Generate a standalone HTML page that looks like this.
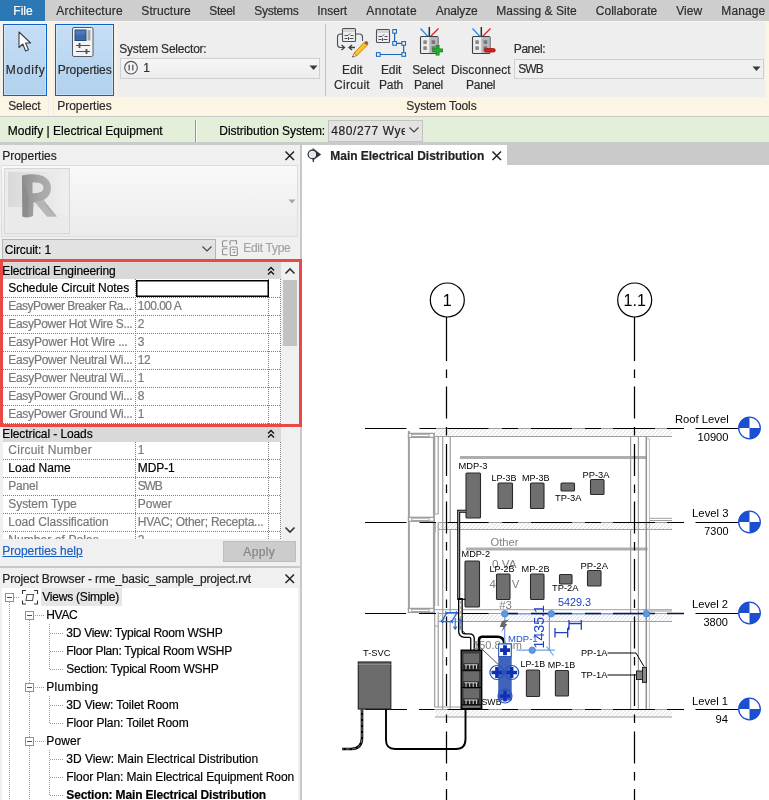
<!DOCTYPE html>
<html><head><meta charset="utf-8"><title>Revit</title>
<style>
html,body{margin:0;padding:0}
body{width:769px;height:800px;position:relative;overflow:hidden;background:#fff;font-family:"Liberation Sans",sans-serif;font-size:12px}
.t{position:absolute;white-space:nowrap;display:block;-webkit-text-stroke:0.18px currentColor}
.b{position:absolute;box-sizing:border-box}
svg{position:absolute;overflow:visible}
svg text{font-family:"Liberation Sans",sans-serif}
#root{position:absolute;left:0;top:0;width:769px;height:800px;will-change:transform;overflow:hidden}
</style></head><body><div id="root">
<div class="b" style="left:0px;top:0px;width:769px;height:21px;background:#cecece;"></div>
<div class="b" style="left:0px;top:0px;width:45px;height:21px;background:#2b78b4;"></div>
<span class="t" style="left:13.30px;top:2.94px;font-size:12px;line-height:16px;color:#ffffff;letter-spacing:0.021px;">File</span>
<span class="t" style="left:56.30px;top:2.94px;font-size:12px;line-height:16px;color:#2c2c2c;letter-spacing:0.216px;">Architecture</span>
<span class="t" style="left:141.30px;top:2.94px;font-size:12px;line-height:16px;color:#2c2c2c;letter-spacing:0.089px;">Structure</span>
<span class="t" style="left:209.30px;top:2.94px;font-size:12px;line-height:16px;color:#2c2c2c;letter-spacing:-0.363px;">Steel</span>
<span class="t" style="left:254.30px;top:2.94px;font-size:12px;line-height:16px;color:#2c2c2c;letter-spacing:-0.268px;">Systems</span>
<span class="t" style="left:317.30px;top:2.94px;font-size:12px;line-height:16px;color:#2c2c2c;letter-spacing:-0.022px;">Insert</span>
<span class="t" style="left:366.30px;top:2.94px;font-size:12px;line-height:16px;color:#2c2c2c;letter-spacing:0.337px;">Annotate</span>
<span class="t" style="left:435.80px;top:2.94px;font-size:12px;line-height:16px;color:#2c2c2c;letter-spacing:-0.132px;">Analyze</span>
<span class="t" style="left:496.30px;top:2.94px;font-size:12px;line-height:16px;color:#2c2c2c;letter-spacing:0.028px;">Massing &amp; Site</span>
<span class="t" style="left:595.80px;top:2.94px;font-size:12px;line-height:16px;color:#2c2c2c;letter-spacing:0.003px;">Collaborate</span>
<span class="t" style="left:676.30px;top:2.94px;font-size:12px;line-height:16px;color:#2c2c2c;letter-spacing:0.035px;">View</span>
<span class="t" style="left:721.30px;top:2.94px;font-size:12px;line-height:16px;color:#2c2c2c;letter-spacing:0.107px;">Manage</span>
<div class="b" style="left:0px;top:21px;width:769px;height:95px;background:#fdf5e4;"></div>
<div class="b" style="left:117px;top:22px;width:648px;height:75px;background:#eeeeee;"></div>
<div class="b" style="left:0px;top:22.4px;width:48.8px;height:74.6px;background:#f5f0ea;"></div>
<div class="b" style="left:53px;top:22.4px;width:63px;height:74.6px;background:#f5f0ea;"></div>
<div class="b" style="left:48px;top:97px;width:1px;height:18.5px;background:#ececec;"></div>
<div class="b" style="left:53px;top:97px;width:1px;height:18.5px;background:#ececec;"></div>
<div class="b" style="left:3px;top:24px;width:44px;height:72px;background:linear-gradient(#c6def5,#b0d1ee);border:1px solid #0f62cc;box-shadow:inset 0 0 0 1px rgba(255,255,255,.3);"></div>
<div class="b" style="left:55px;top:24px;width:59px;height:72px;background:linear-gradient(#c6def5,#b0d1ee);border:1px solid #0f62cc;box-shadow:inset 0 0 0 1px rgba(255,255,255,.3);"></div>
<span class="t" style="left:5.80px;top:62.14px;font-size:12px;line-height:16px;color:#2c2c2c;letter-spacing:0.711px;">Modify</span>
<span class="t" style="left:57.80px;top:62.14px;font-size:12px;line-height:16px;color:#2c2c2c;letter-spacing:-0.088px;">Properties</span>
<span class="t" style="left:8.30px;top:98.14px;font-size:12px;line-height:16px;color:#2c2c2c;letter-spacing:-0.191px;">Select</span>
<span class="t" style="left:57.30px;top:98.14px;font-size:12px;line-height:16px;color:#2c2c2c;letter-spacing:-0.033px;">Properties</span>
<svg style="left:17px;top:30px" width="16" height="24" viewBox="0 0 16 24">
<path d="M2 2 L2 17.5 L5.8 14 L8.6 21 L11.4 19.8 L8.6 13 L13.6 13 Z" fill="#fff" stroke="#3a3f48" stroke-width="1.1" stroke-linejoin="round"/></svg>
<svg style="left:71px;top:26px" width="24" height="32" viewBox="0 0 24 32">
<rect x="1.5" y="1.5" width="20.5" height="29" rx="1.5" fill="#f4f4f4" stroke="#555b66" stroke-width="1"/>
<rect x="4" y="4" width="11" height="10.5" fill="#3b68a8" stroke="#27487c" stroke-width="1"/>
<rect x="4.5" y="4.5" width="10" height="4" fill="#5a86c2" opacity=".6"/>
<rect x="16.5" y="4" width="3" height="10.500" fill="#a8a8a8"/>
<path d="M5 19.500 H19 M5 25.500 H19" stroke="#4a4f58" stroke-width="1.1"/>
<path d="M8.5 17 V22 M15.500 23 V28" stroke="#4a4f58" stroke-width="1.800"/>
</svg>
<span class="t" style="left:119.30px;top:40.64px;font-size:12px;line-height:16px;color:#2c2c2c;letter-spacing:-0.220px;">System Selector:</span>
<div class="b" style="left:120px;top:57.5px;width:200px;height:21px;background:linear-gradient(#f6f6f6,#ececec);border:1px solid #d0d0d0;"></div>
<svg style="left:123px;top:60px" width="16" height="16" viewBox="0 0 16 16">
<circle cx="8" cy="7.7" r="6.300" fill="#f4f4f4" stroke="#505560" stroke-width="1.1"/>
<path d="M6.200 4.800 V10.600 M9.800 4.800 V10.600" stroke="#505560" stroke-width="1.300"/></svg>
<span class="t" style="left:143.30px;top:59.64px;font-size:12px;line-height:16px;color:#2c2c2c;">1</span>
<svg style="left:309px;top:65px" width="10" height="6"><path d="M0.500 0.500 H8.500 L4.500 5 Z" fill="#3a3a3a"/></svg>
<div class="b" style="left:325px;top:24px;width:1px;height:72px;background:#c4c4c4;"></div>
<svg style="left:335px;top:25px" width="34" height="34" viewBox="0 0 34 34">
<path d="M7.500 9 H5.500 Q2.500 9 2.500 12 V19.500 Q2.500 22.500 5.500 22.500 H9" fill="none" stroke="#4a4f5a" stroke-width="1.100"/>
<path d="M20.500 9 H24.500 Q27.500 9 27.500 12 V16" fill="none" stroke="#4a4f5a" stroke-width="1.100"/>
<path d="M6.500 20 L9.500 22.500 L6.500 25 M17 20 L14 22.500 L17 25 M14 22.500 H20" fill="none" stroke="#3a3f4a" stroke-width="1.300"/>
<rect x="7.500" y="3.500" width="13" height="13" rx="1" fill="#efefef" stroke="#4a4f5a" stroke-width="1.100"/>
<rect x="8" y="4" width="12" height="3" fill="#d4d4d4"/>
<path d="M9.500 10.500 H13 L15 8.500 M15.500 10.500 H18.500 M9.500 13.500 H12.500 M13.500 12 V15 M14.500 13.500 H18.500" stroke="#4a4f5a" stroke-width="1" fill="none"/>
<path d="M19 28 L29 17.500 L32 20.500 L21.500 31 Z" fill="#f7c325" stroke="#b87a10" stroke-width=".8"/>
<path d="M29 17.500 L30.300 16.200 Q31.300 15.500 32.300 16.500 L33 17.300 Q33.700 18.300 33 19.200 L32 20.500 Z" fill="#a85f1c"/>
<path d="M19 28 L21.500 31 L17.300 32.200 Z" fill="#f3e6c8" stroke="#8a6a30" stroke-width=".6"/>
<path d="M17.300 32.200 L18.200 30.400 L19 31.600 Z" fill="#333"/>
</svg>
<span class="t" style="left:341.90px;top:62.14px;font-size:12px;line-height:16px;color:#2c2c2c;letter-spacing:0.041px;">Edit</span>
<span class="t" style="left:334.10px;top:77.14px;font-size:12px;line-height:16px;color:#2c2c2c;letter-spacing:0.266px;">Circuit</span>
<svg style="left:374px;top:26px" width="34" height="34" viewBox="0 0 34 34">
<rect x="2.500" y="3.500" width="13" height="13" rx="1" fill="#efefef" stroke="#4a4f5a" stroke-width="1.100"/>
<rect x="3" y="4" width="12" height="3" fill="#d4d4d4"/>
<path d="M4.500 10.500 H8 L10 8.500 M10.500 10.500 H13.500 M4.500 13.500 H7.500 M8.500 12 V15 M9.500 13.500 H13.500" stroke="#4a4f5a" stroke-width="1" fill="none"/>
<path d="M20.600 5.400 V17.400 H29.700 V28.500 H4.300" fill="none" stroke="#1a66b8" stroke-width="1.200"/>
<g fill="#fff" stroke="#1a66b8" stroke-width="1.100">
<rect x="18.800" y="3.600" width="3.600" height="3.600"/><rect x="18.800" y="15.600" width="3.600" height="3.600"/>
<rect x="27.900" y="15.600" width="3.600" height="3.600"/><rect x="27.900" y="26.700" width="3.600" height="3.600"/>
<rect x="2.500" y="26.700" width="3.600" height="3.600"/></g>
</svg>
<span class="t" style="left:380.90px;top:62.14px;font-size:12px;line-height:16px;color:#2c2c2c;letter-spacing:-0.059px;">Edit</span>
<span class="t" style="left:378.90px;top:77.14px;font-size:12px;line-height:16px;color:#2c2c2c;letter-spacing:-0.095px;">Path</span>
<svg style="left:419px;top:26px" width="30" height="32" viewBox="0 0 30 32">
<path d="M1.500 2.500 L9 10.500" stroke="#1e90ff" stroke-width="1.300"/>
<path d="M19.500 2.500 L11.500 10.500" stroke="#e02020" stroke-width="1.300"/>
<path d="M10.300 1 V10.500" stroke="#2a2e36" stroke-width="1.500"/>
<rect x="1.500" y="10.500" width="17.500" height="17" rx="1" fill="#ececec" stroke="#3a3f4a" stroke-width="1.100"/>
<rect x="10.300" y="11" width="8.200" height="16" fill="#b9b9b9"/>
<rect x="4.300" y="14.300" width="3.600" height="3.600" rx=".6" fill="#8a8a8a"/><rect x="4.300" y="20.300" width="3.600" height="3.600" rx=".6" fill="#8a8a8a"/>
<rect x="12.600" y="14.300" width="3.600" height="3.600" rx=".6" fill="#777"/><rect x="12.600" y="20.300" width="3.600" height="3.600" rx=".6" fill="#777"/>
<path d="M18.600 19 V29.600 M13.300 24.300 H23.900" stroke="#0a7a10" stroke-width="3.800"/><path d="M18.600 19.600 V29 M13.900 24.300 H23.300" stroke="#22b02a" stroke-width="2.400"/></svg>
<svg style="left:471px;top:26px" width="30" height="32" viewBox="0 0 30 32">
<path d="M1.500 2.500 L9 10.500" stroke="#1e90ff" stroke-width="1.300"/>
<path d="M19.500 2.500 L11.500 10.500" stroke="#e02020" stroke-width="1.300"/>
<path d="M10.300 1 V10.500" stroke="#2a2e36" stroke-width="1.500"/>
<rect x="1.500" y="10.500" width="17.500" height="17" rx="1" fill="#ececec" stroke="#3a3f4a" stroke-width="1.100"/>
<rect x="10.300" y="11" width="8.200" height="16" fill="#b9b9b9"/>
<rect x="4.300" y="14.300" width="3.600" height="3.600" rx=".6" fill="#8a8a8a"/><rect x="4.300" y="20.300" width="3.600" height="3.600" rx=".6" fill="#8a8a8a"/>
<rect x="12.600" y="14.300" width="3.600" height="3.600" rx=".6" fill="#777"/><rect x="12.600" y="20.300" width="3.600" height="3.600" rx=".6" fill="#777"/>
<rect x="13.200" y="22.600" width="11" height="3.400" rx="1.500" fill="#d81e1e" stroke="#a01010" stroke-width=".8"/></svg>
<span class="t" style="left:412.30px;top:62.14px;font-size:12px;line-height:16px;color:#2c2c2c;letter-spacing:-0.191px;">Select</span>
<span class="t" style="left:414.10px;top:77.14px;font-size:12px;line-height:16px;color:#2c2c2c;letter-spacing:-0.398px;">Panel</span>
<span class="t" style="left:450.90px;top:62.14px;font-size:12px;line-height:16px;color:#2c2c2c;letter-spacing:0.049px;">Disconnect</span>
<span class="t" style="left:466.10px;top:77.14px;font-size:12px;line-height:16px;color:#2c2c2c;letter-spacing:-0.323px;">Panel</span>
<span class="t" style="left:513.80px;top:40.64px;font-size:12px;line-height:16px;color:#2c2c2c;letter-spacing:-0.425px;">Panel:</span>
<div class="b" style="left:514px;top:59px;width:250px;height:20px;background:#f0f0f0;border:1px solid #cfcfcf;"></div>
<span class="t" style="left:518.30px;top:61.14px;font-size:12px;line-height:16px;color:#2c2c2c;letter-spacing:-0.967px;">SWB</span>
<svg style="left:752px;top:66px" width="10" height="6"><path d="M0.500 0.500 H8.500 L4.500 5 Z" fill="#3a3a3a"/></svg>
<span class="t" style="left:406.30px;top:98.14px;font-size:12px;line-height:16px;color:#2c2c2c;letter-spacing:-0.067px;">System Tools</span>
<div class="b" style="left:0px;top:116px;width:769px;height:1px;background:#c9c9c9;"></div>
<div class="b" style="left:0px;top:117px;width:769px;height:25px;background:#e4efd9;"></div>
<span class="t" style="left:7.80px;top:122.64px;font-size:12px;line-height:16px;color:#000;letter-spacing:0.014px;">Modify | Electrical Equipment</span>
<div class="b" style="left:195px;top:120px;width:1px;height:22px;background:#8f968a;"></div>
<div class="b" style="left:196px;top:120px;width:1px;height:22px;background:#ffffff;"></div>
<span class="t" style="left:219.30px;top:122.64px;font-size:12px;line-height:16px;color:#000;letter-spacing:-0.042px;">Distribution System:</span>
<div class="b" style="left:328px;top:119.5px;width:95px;height:22px;background:#e3e3e3;border:1px solid #c3c3c3;"></div>
<span class="t" style="left:331.30px;top:122.64px;font-size:12px;line-height:16px;color:#222;letter-spacing:0.579px;width:73.5px;overflow:hidden;">480/277 Wye</span>
<svg style="left:408px;top:126px" width="12" height="8"><path d="M1.500 1.500 L6 6 L10.500 1.500" fill="none" stroke="#444" stroke-width="1.200"/></svg>
<div class="b" style="left:0px;top:142px;width:769px;height:22.5px;background:#cacaca;"></div>
<div class="b" style="left:0px;top:145px;width:300px;height:421px;background:#f0f0f0;"></div>
<div class="b" style="left:300px;top:145px;width:2px;height:655px;background:#c8c8c8;"></div>
<span class="t" style="left:2.30px;top:147.64px;font-size:12px;line-height:16px;color:#222;letter-spacing:-0.033px;">Properties</span>
<svg style="left:284px;top:150px" width="12" height="12"><path d="M1.500 1.500 L10 10 M10 1.500 L1.500 10" stroke="#222" stroke-width="1.500"/></svg>
<div class="b" style="left:1px;top:165px;width:297px;height:72px;background:linear-gradient(#f9f9f9,#ebebeb);border:1px solid #dedede;"></div>
<div class="b" style="left:4px;top:168px;width:66px;height:66px;background:#ececec;border:1px solid #d6d6d6;"></div>
<svg style="left:5px;top:169px" width="64" height="64" viewBox="0 0 64 64">
<defs><linearGradient id="tg" x1="0" x2="1"><stop offset="0" stop-color="#d9d9d9"/><stop offset="1" stop-color="#efefef"/></linearGradient>
<linearGradient id="rg" x1="0" x2="1"><stop offset="0" stop-color="#8f8f8f"/><stop offset=".5" stop-color="#a6a6a6"/><stop offset="1" stop-color="#b4b4b4"/></linearGradient></defs>
<path d="M3 3 H63 V47 L30 38 L3 38 Z" fill="url(#tg)"/>
<path d="M3 38 L30 38 L63 47 V63 H3 Z" fill="#eaeaea"/>
<path d="M17 6.500 Q30 4 38 7 Q46 11 46 19 Q46 27 38.500 31 L52 47.500 L42 47.500 L30 33 L28.500 33.500 L28 47 Q23 49.500 17.500 47.500 Z M27.500 13.500 V24.200 Q38.500 24.800 38.500 18.600 Q38.500 12.800 27.500 13.500 Z" fill="url(#rg)" fill-rule="evenodd"/>
<path d="M17 6.500 L17.500 47.500 Q20 48.500 22.500 48.300 L24 30 Q22 18 17 6.500 Z" fill="#8a8a8a" opacity=".75"/>
<path d="M30 33 L42 47.500 L52 47.500 Q44 45.500 38.500 31 Z" fill="#bcbcbc" opacity=".7"/>
</svg>
<svg style="left:288px;top:199px" width="9" height="6"><path d="M0.500 0.500 H7.500 L4 4.500 Z" fill="#a4a4a4"/></svg>
<div class="b" style="left:2px;top:239px;width:214px;height:21px;background:#e2e2e2;border:1px solid #b5b5b5;border-bottom-color:#e2e2e2;"></div>
<span class="t" style="left:4.80px;top:241.64px;font-size:12px;line-height:16px;color:#000;letter-spacing:-0.105px;">Circuit: 1</span>
<svg style="left:201px;top:245px" width="12" height="8"><path d="M1.500 1.500 L6 6 L10.500 1.500" fill="none" stroke="#444" stroke-width="1.200"/></svg>
<svg style="left:221px;top:239px" width="18" height="18" viewBox="0 0 18 18" fill="none" stroke="#8f8f8f" stroke-width="1.100">
<path d="M6.500 1.800 H2.800 Q1.500 1.800 1.500 3 V6.500 Q1.500 7.800 2.800 7.800 H6.500"/>
<path d="M6.500 9.800 H2.800 Q1.500 9.800 1.500 11 V14.500 Q1.500 15.800 2.800 15.800 H6.500"/>
<path d="M9 1.800 H15.500 V5.500 M9 1.800 V6"/>
<rect x="9.300" y="8" width="7" height="8.500" rx="1" fill="#f4f4f4"/>
<path d="M11 10.500 H14.600 M11.500 13.300 H14 M13 12.300 L14.200 13.300 L13 14.300" stroke-width=".9"/></svg>
<span class="t" style="left:243.30px;top:240.14px;font-size:12px;line-height:16px;color:#a3a3a3;letter-spacing:-0.302px;">Edit Type</span>
<div class="b" style="left:3px;top:262px;width:278px;height:277px;background:#ffffff;"></div>
<div class="b" style="left:281px;top:262px;width:17px;height:277px;background:#f0f0f0;"></div>
<div class="b" style="left:3px;top:262px;width:278px;height:17px;background:#d9d9d9;"></div>
<div class="b" style="left:3px;top:427px;width:278px;height:15px;background:#d9d9d9;"></div>
<svg style="left:267px;top:265.5px" width="8" height="10"><path d="M1 4.500 L4 1.500 L7 4.500 M1 8.500 L4 5.500 L7 8.500" fill="none" stroke="#111" stroke-width="1.300"/></svg>
<svg style="left:267px;top:428.5px" width="8" height="10"><path d="M1 4.500 L4 1.500 L7 4.500 M1 8.500 L4 5.500 L7 8.500" fill="none" stroke="#111" stroke-width="1.300"/></svg>
<span class="t" style="left:2.30px;top:263.14px;font-size:12px;line-height:16px;color:#000000;letter-spacing:-0.127px;">Electrical Engineering</span>
<span class="t" style="left:2.30px;top:425.64px;font-size:12px;line-height:16px;color:#000000;letter-spacing:-0.097px;">Electrical - Loads</span>
<span class="t" style="left:8.30px;top:280.14px;font-size:12px;line-height:16px;color:#000000;letter-spacing:-0.055px;">Schedule Circuit Notes</span>
<div class="b" style="left:3px;top:297px;width:278px;height:1px;background-image:linear-gradient(to right,#7d7d7d 50%,transparent 50%);background-size:2px 1px;"></div>
<span class="t" style="left:8.30px;top:298.14px;font-size:12px;line-height:16px;color:#787878;letter-spacing:-0.501px;">EasyPower Breaker Ra...</span>
<span class="t" style="left:137.80px;top:298.14px;font-size:12px;line-height:16px;color:#787878;letter-spacing:-0.497px;">100.00 A</span>
<div class="b" style="left:3px;top:315px;width:278px;height:1px;background-image:linear-gradient(to right,#7d7d7d 50%,transparent 50%);background-size:2px 1px;"></div>
<span class="t" style="left:8.30px;top:316.14px;font-size:12px;line-height:16px;color:#787878;letter-spacing:-0.347px;">EasyPower Hot Wire S...</span>
<span class="t" style="left:137.80px;top:316.14px;font-size:12px;line-height:16px;color:#787878;">2</span>
<div class="b" style="left:3px;top:333px;width:278px;height:1px;background-image:linear-gradient(to right,#7d7d7d 50%,transparent 50%);background-size:2px 1px;"></div>
<span class="t" style="left:8.30px;top:334.14px;font-size:12px;line-height:16px;color:#787878;letter-spacing:-0.221px;">EasyPower Hot Wire ...</span>
<span class="t" style="left:137.80px;top:334.14px;font-size:12px;line-height:16px;color:#787878;">3</span>
<div class="b" style="left:3px;top:351px;width:278px;height:1px;background-image:linear-gradient(to right,#7d7d7d 50%,transparent 50%);background-size:2px 1px;"></div>
<span class="t" style="left:8.30px;top:352.14px;font-size:12px;line-height:16px;color:#787878;letter-spacing:-0.256px;">EasyPower Neutral Wi...</span>
<span class="t" style="left:137.80px;top:352.14px;font-size:12px;line-height:16px;color:#787878;letter-spacing:-0.448px;">12</span>
<div class="b" style="left:3px;top:369px;width:278px;height:1px;background-image:linear-gradient(to right,#7d7d7d 50%,transparent 50%);background-size:2px 1px;"></div>
<span class="t" style="left:8.30px;top:370.14px;font-size:12px;line-height:16px;color:#787878;letter-spacing:-0.256px;">EasyPower Neutral Wi...</span>
<span class="t" style="left:137.80px;top:370.14px;font-size:12px;line-height:16px;color:#787878;">1</span>
<div class="b" style="left:3px;top:387px;width:278px;height:1px;background-image:linear-gradient(to right,#7d7d7d 50%,transparent 50%);background-size:2px 1px;"></div>
<span class="t" style="left:8.30px;top:388.14px;font-size:12px;line-height:16px;color:#787878;letter-spacing:-0.332px;">EasyPower Ground Wi...</span>
<span class="t" style="left:137.80px;top:388.14px;font-size:12px;line-height:16px;color:#787878;">8</span>
<div class="b" style="left:3px;top:405px;width:278px;height:1px;background-image:linear-gradient(to right,#7d7d7d 50%,transparent 50%);background-size:2px 1px;"></div>
<span class="t" style="left:8.30px;top:406.14px;font-size:12px;line-height:16px;color:#787878;letter-spacing:-0.332px;">EasyPower Ground Wi...</span>
<span class="t" style="left:137.80px;top:406.14px;font-size:12px;line-height:16px;color:#787878;">1</span>
<div class="b" style="left:3px;top:423px;width:278px;height:1px;background-image:linear-gradient(to right,#7d7d7d 50%,transparent 50%);background-size:2px 1px;"></div>
<div class="b" style="left:135px;top:279px;width:1px;height:145px;background-image:linear-gradient(to bottom,#7d7d7d 50%,transparent 50%);background-size:1px 2px;"></div>
<div class="b" style="left:268px;top:279px;width:1px;height:145px;background-image:linear-gradient(to bottom,#7d7d7d 50%,transparent 50%);background-size:1px 2px;"></div>
<div class="b" style="left:280px;top:279px;width:1px;height:145px;background-image:linear-gradient(to bottom,#7d7d7d 50%,transparent 50%);background-size:1px 2px;"></div>
<div class="b" style="left:136px;top:280px;width:133px;height:17px;background:#fff;border:1px solid #000;box-shadow:inset 0 0 0 0.500px #000;"></div>
<div class="b" style="left:3px;top:441px;width:278px;height:98px;overflow:hidden">
<span class="t" style="left:5.30px;top:0.64px;font-size:12px;line-height:16px;color:#787878;letter-spacing:0.260px;">Circuit Number</span>
<span class="t" style="left:134.80px;top:0.64px;font-size:12px;line-height:16px;color:#787878;">1</span>
<span class="t" style="left:5.30px;top:18.64px;font-size:12px;line-height:16px;color:#000000;letter-spacing:0.045px;">Load Name</span>
<span class="t" style="left:134.80px;top:18.64px;font-size:12px;line-height:16px;color:#000000;letter-spacing:-0.109px;">MDP-1</span>
<span class="t" style="left:5.30px;top:36.64px;font-size:12px;line-height:16px;color:#787878;letter-spacing:-0.198px;">Panel</span>
<span class="t" style="left:134.80px;top:36.64px;font-size:12px;line-height:16px;color:#787878;letter-spacing:-1.217px;">SWB</span>
<span class="t" style="left:5.30px;top:54.64px;font-size:12px;line-height:16px;color:#787878;letter-spacing:-0.074px;">System Type</span>
<span class="t" style="left:134.80px;top:54.64px;font-size:12px;line-height:16px;color:#787878;letter-spacing:-0.029px;">Power</span>
<span class="t" style="left:5.30px;top:72.64px;font-size:12px;line-height:16px;color:#787878;letter-spacing:-0.018px;">Load Classification</span>
<span class="t" style="left:134.80px;top:72.64px;font-size:12px;line-height:16px;color:#787878;letter-spacing:-0.209px;">HVAC; Other; Recepta...</span>
<span class="t" style="left:5.30px;top:90.64px;font-size:12px;line-height:16px;color:#787878;letter-spacing:0.073px;">Number of Poles</span>
<span class="t" style="left:134.80px;top:90.64px;font-size:12px;line-height:16px;color:#787878;">2</span>
</div>
<div class="b" style="left:3px;top:459px;width:278px;height:1px;background-image:linear-gradient(to right,#7d7d7d 50%,transparent 50%);background-size:2px 1px;"></div>
<div class="b" style="left:3px;top:477px;width:278px;height:1px;background-image:linear-gradient(to right,#7d7d7d 50%,transparent 50%);background-size:2px 1px;"></div>
<div class="b" style="left:3px;top:495px;width:278px;height:1px;background-image:linear-gradient(to right,#7d7d7d 50%,transparent 50%);background-size:2px 1px;"></div>
<div class="b" style="left:3px;top:513px;width:278px;height:1px;background-image:linear-gradient(to right,#7d7d7d 50%,transparent 50%);background-size:2px 1px;"></div>
<div class="b" style="left:3px;top:531px;width:278px;height:1px;background-image:linear-gradient(to right,#7d7d7d 50%,transparent 50%);background-size:2px 1px;"></div>
<div class="b" style="left:135px;top:442px;width:1px;height:97px;background-image:linear-gradient(to bottom,#7d7d7d 50%,transparent 50%);background-size:1px 2px;"></div>
<div class="b" style="left:268px;top:442px;width:1px;height:97px;background-image:linear-gradient(to bottom,#7d7d7d 50%,transparent 50%);background-size:1px 2px;"></div>
<div class="b" style="left:280px;top:442px;width:1px;height:97px;background-image:linear-gradient(to bottom,#7d7d7d 50%,transparent 50%);background-size:1px 2px;"></div>
<div class="b" style="left:283px;top:280px;width:14px;height:66px;background:#c2c2c2;"></div>
<svg style="left:284px;top:267px" width="12" height="8"><path d="M1.500 6.500 L6 2 L10.500 6.500" fill="none" stroke="#333" stroke-width="1.600"/></svg>
<svg style="left:284px;top:526px" width="12" height="8"><path d="M1.500 1.500 L6 6 L10.500 1.500" fill="none" stroke="#333" stroke-width="1.600"/></svg>
<div class="b" style="left:0px;top:259px;width:302px;height:168px;border:3px solid #e84a43;"></div>
<span class="t" style="left:2.30px;top:543.14px;font-size:12px;line-height:16px;color:#1a5fc4;letter-spacing:-0.023px;text-decoration:underline;">Properties help</span>
<div class="b" style="left:223px;top:541px;width:73px;height:21px;background:#cccccc;border:1px solid #bdbdbd;"></div>
<span class="t" style="left:243.30px;top:543.64px;font-size:12px;line-height:16px;color:#858585;letter-spacing:0.345px;">Apply</span>
<div class="b" style="left:0px;top:566px;width:300px;height:2px;background:#c8c8c8;"></div>
<div class="b" style="left:0px;top:568px;width:300px;height:232px;background:#f0f0f0;"></div>
<div class="b" style="left:2px;top:587.5px;width:295.5px;height:213px;background:#ffffff;"></div>
<span class="t" style="left:2.30px;top:571.14px;font-size:12px;line-height:16px;color:#222;letter-spacing:-0.145px;">Project Browser - rme_basic_sample_project.rvt</span>
<svg style="left:284px;top:573px" width="12" height="12"><path d="M1.500 1.500 L10 10 M10 1.500 L1.500 10" stroke="#222" stroke-width="1.500"/></svg>
<div class="b" style="left:41px;top:588px;width:81px;height:18px;background:#e6e6e6;"></div>
<span class="t" style="left:42.30px;top:589.14px;font-size:12px;line-height:16px;color:#000;letter-spacing:-0.223px;">Views (Simple)</span>
<span class="t" style="left:46.30px;top:607.14px;font-size:12px;line-height:16px;color:#000;letter-spacing:-0.350px;">HVAC</span>
<span class="t" style="left:66.30px;top:625.14px;font-size:12px;line-height:16px;color:#000;letter-spacing:-0.262px;">3D View: Typical Room WSHP</span>
<span class="t" style="left:66.30px;top:643.14px;font-size:12px;line-height:16px;color:#000;letter-spacing:-0.260px;">Floor Plan: Typical Room WSHP</span>
<span class="t" style="left:66.30px;top:661.14px;font-size:12px;line-height:16px;color:#000;letter-spacing:-0.244px;">Section: Typical Room WSHP</span>
<span class="t" style="left:46.30px;top:679.14px;font-size:12px;line-height:16px;color:#000;letter-spacing:0.267px;">Plumbing</span>
<span class="t" style="left:66.30px;top:697.14px;font-size:12px;line-height:16px;color:#000;letter-spacing:-0.099px;">3D View: Toilet Room</span>
<span class="t" style="left:66.30px;top:715.14px;font-size:12px;line-height:16px;color:#000;letter-spacing:-0.096px;">Floor Plan: Toilet Room</span>
<span class="t" style="left:46.30px;top:733.14px;font-size:12px;line-height:16px;color:#000;letter-spacing:0.096px;">Power</span>
<span class="t" style="left:66.30px;top:751.14px;font-size:12px;line-height:16px;color:#000;letter-spacing:-0.017px;">3D View: Main Electrical Distribution</span>
<span class="t" style="left:66.30px;top:769.14px;font-size:12px;line-height:16px;color:#000;letter-spacing:-0.103px;">Floor Plan: Main Electrical Equipment Roon</span>
<span class="t" style="left:66.30px;top:787.14px;font-size:12px;line-height:16px;color:#000;letter-spacing:-0.152px;font-weight:bold;">Section: Main Electrical Distribution</span>
<div class="b" style="left:9px;top:602px;width:1px;height:198px;background-image:linear-gradient(to bottom,#9a9a9a 50%,transparent 50%);background-size:1px 2px;"></div>
<div class="b" style="left:14px;top:597px;width:6px;height:1px;background-image:linear-gradient(to right,#9a9a9a 50%,transparent 50%);background-size:2px 1px;"></div>
<div class="b" style="left:29px;top:620px;width:1px;height:180px;background-image:linear-gradient(to bottom,#9a9a9a 50%,transparent 50%);background-size:1px 2px;"></div>
<div class="b" style="left:35px;top:615px;width:9px;height:1px;background-image:linear-gradient(to right,#9a9a9a 50%,transparent 50%);background-size:2px 1px;"></div>
<div class="b" style="left:35px;top:687px;width:9px;height:1px;background-image:linear-gradient(to right,#9a9a9a 50%,transparent 50%);background-size:2px 1px;"></div>
<div class="b" style="left:35px;top:741px;width:9px;height:1px;background-image:linear-gradient(to right,#9a9a9a 50%,transparent 50%);background-size:2px 1px;"></div>
<div class="b" style="left:49px;top:624px;width:1px;height:45px;background-image:linear-gradient(to bottom,#9a9a9a 50%,transparent 50%);background-size:1px 2px;"></div>
<div class="b" style="left:49px;top:696px;width:1px;height:27px;background-image:linear-gradient(to bottom,#9a9a9a 50%,transparent 50%);background-size:1px 2px;"></div>
<div class="b" style="left:49px;top:750px;width:1px;height:45px;background-image:linear-gradient(to bottom,#9a9a9a 50%,transparent 50%);background-size:1px 2px;"></div>
<div class="b" style="left:50px;top:633px;width:14px;height:1px;background-image:linear-gradient(to right,#9a9a9a 50%,transparent 50%);background-size:2px 1px;"></div>
<div class="b" style="left:50px;top:651px;width:14px;height:1px;background-image:linear-gradient(to right,#9a9a9a 50%,transparent 50%);background-size:2px 1px;"></div>
<div class="b" style="left:50px;top:669px;width:14px;height:1px;background-image:linear-gradient(to right,#9a9a9a 50%,transparent 50%);background-size:2px 1px;"></div>
<div class="b" style="left:50px;top:705px;width:14px;height:1px;background-image:linear-gradient(to right,#9a9a9a 50%,transparent 50%);background-size:2px 1px;"></div>
<div class="b" style="left:50px;top:723px;width:14px;height:1px;background-image:linear-gradient(to right,#9a9a9a 50%,transparent 50%);background-size:2px 1px;"></div>
<div class="b" style="left:50px;top:759px;width:14px;height:1px;background-image:linear-gradient(to right,#9a9a9a 50%,transparent 50%);background-size:2px 1px;"></div>
<div class="b" style="left:50px;top:777px;width:14px;height:1px;background-image:linear-gradient(to right,#9a9a9a 50%,transparent 50%);background-size:2px 1px;"></div>
<div class="b" style="left:50px;top:795px;width:14px;height:1px;background-image:linear-gradient(to right,#9a9a9a 50%,transparent 50%);background-size:2px 1px;"></div>
<svg style="left:5px;top:593px" width="9" height="9"><rect x=".5" y=".5" width="8" height="8" fill="#fff" stroke="#919191"/><path d="M2 4.500 H7" stroke="#3b4f8a" stroke-width="1"/></svg>
<svg style="left:25px;top:611px" width="9" height="9"><rect x=".5" y=".5" width="8" height="8" fill="#fff" stroke="#919191"/><path d="M2 4.500 H7" stroke="#3b4f8a" stroke-width="1"/></svg>
<svg style="left:25px;top:683px" width="9" height="9"><rect x=".5" y=".5" width="8" height="8" fill="#fff" stroke="#919191"/><path d="M2 4.500 H7" stroke="#3b4f8a" stroke-width="1"/></svg>
<svg style="left:25px;top:737px" width="9" height="9"><rect x=".5" y=".5" width="8" height="8" fill="#fff" stroke="#919191"/><path d="M2 4.500 H7" stroke="#3b4f8a" stroke-width="1"/></svg>
<svg style="left:21px;top:589px" width="18" height="17" viewBox="0 0 18 17" fill="none" stroke="#333" stroke-width="1.100">
<path d="M1.500 5 V1.500 H5 M13 1.500 H16.500 V5 M16.500 11.500 V15 H13 M5 15 H1.500 V11.500"/>
<path d="M6 5.500 H12.500 L11.500 11.500 H5 Z" stroke="#555"/></svg>
<div class="b" style="left:302px;top:145px;width:205px;height:20px;background:#ffffff;"></div>
<div class="b" style="left:302px;top:164.5px;width:467px;height:635.5px;background:#ffffff;"></div>
<svg style="left:306px;top:146px" width="18" height="18" viewBox="306 146 18 18">
<path d="M312.600 148 L321.200 154.400 L312.600 160.800 Z" fill="#2b303b"/>
<path d="M313.400 158 V162" stroke="#2b303b" stroke-width="1.200"/>
<circle cx="312.400" cy="154.400" r="4.300" fill="#e3e7ed" stroke="#2b303b" stroke-width="1.200"/></svg>
<span class="t" style="left:330.30px;top:147.64px;font-size:12px;line-height:16px;color:#222;letter-spacing:-0.029px;font-weight:bold;">Main Electrical Distribution</span>
<svg style="left:491px;top:150px" width="12" height="12"><path d="M1.500 1.500 L10 10 M10 1.500 L1.500 10" stroke="#222" stroke-width="1.500"/></svg>
<svg style="left:0;top:0" width="769" height="800" viewBox="0 0 769 800">
<defs>
<pattern id="hat" width="4" height="4" patternUnits="userSpaceOnUse"><rect width="4" height="4" fill="#fbfbfe"/><path d="M-1 5 L5 -1 M-3 3 L3 -3 M1 7 L7 1" stroke="#dcdcf0" stroke-width=".9"/></pattern>
<clipPath id="dc"><rect x="302" y="165" width="467" height="635"/></clipPath>
</defs><g clip-path="url(#dc)">
<rect x="434.5" y="428.5" width="237.5" height="8.0" fill="url(#hat)"/>
<path d="M434.5 436.5 H672 M434.5 428.5 H672" stroke="#9e9e9e" stroke-width="1.200"/>
<rect x="439" y="522.5" width="233" height="7.0" fill="url(#hat)"/>
<path d="M439 529.5 H672 M439 522.5 H672" stroke="#9e9e9e" stroke-width="1.200"/>
<rect x="439" y="613.5" width="233" height="8.0" fill="url(#hat)"/>
<path d="M439 621.5 H672 M439 613.5 H672" stroke="#9e9e9e" stroke-width="1.200"/>
<rect x="435" y="709.5" width="237" height="7.5" fill="url(#hat)"/>
<path d="M435 717 H672 M435 709.5 H672" stroke="#9e9e9e" stroke-width="1.200"/>
<path d="M435 609.700 H672 M649 518.300 H672 M649 520.500 H672 M649 611 H672 M434.500 707 H461 M434.700 626 H438.200" stroke="#9e9e9e" stroke-width="1" fill="none"/>
<rect x="460" y="456" width="186" height="3" fill="#aeaeae"/>
<rect x="466" y="547.500" width="181.500" height="3" fill="#aeaeae"/>
<g stroke="#9e9e9e" stroke-width="1.200" fill="none">
<path d="M408.900 431 V613 M433.900 433 V613" stroke="#a2a2a2" stroke-width="2"/>
<rect x="408.500" y="433.4" width="25.500" height="4" fill="#fff" stroke-width="1.300"/>
<rect x="411.700" y="434.29999999999995" width="17.500" height="2.200" fill="none" stroke-width=".9"/>
<rect x="408.500" y="517.3" width="25.500" height="4" fill="#fff" stroke-width="1.300"/>
<rect x="411.700" y="518.1999999999999" width="17.500" height="2.200" fill="none" stroke-width=".9"/>
<rect x="408.500" y="608.4" width="25.500" height="4" fill="#fff" stroke-width="1.300"/>
<rect x="411.700" y="609.3" width="17.500" height="2.200" fill="none" stroke-width=".9"/>
<path d="M434.700 437 V514 M438.200 437 V514 M434.700 514 H438.200 M435.200 522 V532.500 M438.200 522 V532.500 M434.700 532.500 V606 M438.200 532.500 V606 M434.700 612 V707 M438.200 612 V707"/>
<path d="M442.700 436.500 V709 M450.200 436.500 V522 M450.200 529.500 V613 M450.200 621.500 V709"/>
<path d="M630.600 436.500 V522 M630.600 529.500 V613 M630.600 621.500 V709 M638.400 436.500 V709"/>
<path d="M646.300 436.500 V709" stroke="#909090" stroke-width="1.500"/>
<path d="M649.400 438.800 V709 M646.300 438.800 H649.400" stroke="#c2bcbc" stroke-width="1"/>
</g>
<path d="M446.5 317 V361" stroke="#000" stroke-width="1.250"/>
<path d="M446.5 361 V800" stroke="#000" stroke-width="1.250" stroke-dasharray="0 8.500 8.500 8.500 32 0"/>
<path d="M634.5 317 V361" stroke="#000" stroke-width="1.250"/>
<path d="M634.5 361 V800" stroke="#000" stroke-width="1.250" stroke-dasharray="0 8.500 8.500 8.500 32 0"/>
<circle cx="447.300" cy="300" r="17" fill="#fff" stroke="#000" stroke-width="1.200"/>
<circle cx="634.700" cy="300" r="17" fill="#fff" stroke="#000" stroke-width="1.200"/>
<text x="447.300" y="305.800" font-size="16" text-anchor="middle" fill="#000">1</text>
<text x="634.700" y="305.800" font-size="16" text-anchor="middle" fill="#000">1.1</text>
<path d="M365 428.5 H406.500 M419.500 428.5 H436 M447.500 428.5 H488.500 M502 428.5 H518 M531 428.5 H572 M585 428.5 H601 M613 428.5 H655 M667 428.5 H684 M695.500 428.5 H738.500" stroke="#000" stroke-width="1.200" fill="none"/>
<path d="M365 522.5 H406.500 M419.500 522.5 H436 M447.500 522.5 H488.500 M502 522.5 H518 M531 522.5 H572 M585 522.5 H601 M613 522.5 H655 M667 522.5 H684 M695.500 522.5 H738.500" stroke="#000" stroke-width="1.200" fill="none"/>
<path d="M365 613.5 H406 M419 613.5 H436 M460 613.5 H488.500 M502 613.5 H518 M531 613.5 H572 M585 613.5 H601 M613 613.5 H655 M667 613.5 H684 M695.500 613.5 H738.500" stroke="#000" stroke-width="1.200" fill="none"/>
<path d="M365 709.5 H407 M419 709.5 H434.500 M447.500 709.5 H488.500 M502 709.5 H518 M531 709.5 H572 M585 709.5 H601 M613 709.5 H655 M667 709.5 H684 M695.500 709.5 H738.500" stroke="#000" stroke-width="1.200" fill="none"/>
<circle cx="749.500" cy="428" r="10.800" fill="#fff" stroke="#1b4fd0" stroke-width="1.300"/>
<path d="M749.500 428 V417.2 A10.800 10.800 0 0 0 738.7 428 Z M749.500 428 V438.8 A10.800 10.800 0 0 0 760.3 428 Z" fill="#1b4fd0"/>
<circle cx="749.500" cy="522" r="10.800" fill="#fff" stroke="#1b4fd0" stroke-width="1.300"/>
<path d="M749.500 522 V511.2 A10.800 10.800 0 0 0 738.7 522 Z M749.500 522 V532.8 A10.800 10.800 0 0 0 760.3 522 Z" fill="#1b4fd0"/>
<circle cx="749.500" cy="613" r="10.800" fill="#fff" stroke="#1b4fd0" stroke-width="1.300"/>
<path d="M749.500 613 V602.2 A10.800 10.800 0 0 0 738.7 613 Z M749.500 613 V623.8 A10.800 10.800 0 0 0 760.3 613 Z" fill="#1b4fd0"/>
<circle cx="749.500" cy="709" r="10.800" fill="#fff" stroke="#1b4fd0" stroke-width="1.300"/>
<path d="M749.500 709 V698.2 A10.800 10.800 0 0 0 738.7 709 Z M749.500 709 V719.8 A10.800 10.800 0 0 0 760.3 709 Z" fill="#1b4fd0"/>
<text x="674.90" y="422.94" font-size="11" fill="#000" textLength="53.80" lengthAdjust="spacingAndGlyphs">Roof Level</text>
<text x="697.50" y="441.34" font-size="11" fill="#000" textLength="31.00" lengthAdjust="spacingAndGlyphs">10900</text>
<text x="692.10" y="517.44" font-size="11" fill="#000" textLength="36.40" lengthAdjust="spacingAndGlyphs">Level 3</text>
<text x="704.30" y="534.94" font-size="11" fill="#000" textLength="24.20" lengthAdjust="spacingAndGlyphs">7300</text>
<text x="692.00" y="607.94" font-size="11" fill="#000" textLength="36.00" lengthAdjust="spacingAndGlyphs">Level 2</text>
<text x="703.50" y="625.94" font-size="11" fill="#000" textLength="24.50" lengthAdjust="spacingAndGlyphs">3800</text>
<text x="692.00" y="704.94" font-size="11" fill="#000" textLength="36.00" lengthAdjust="spacingAndGlyphs">Level 1</text>
<text x="715.50" y="722.64" font-size="11" fill="#000" textLength="12.50" lengthAdjust="spacingAndGlyphs">94</text>
<text x="490.50" y="545.94" font-size="11" fill="#808080" textLength="28.00" lengthAdjust="spacingAndGlyphs">Other</text>
<text x="492.00" y="567.94" font-size="11" fill="#808080" textLength="24.50" lengthAdjust="spacingAndGlyphs">0 VA</text>
<text x="489.50" y="587.94" font-size="11" fill="#808080" textLength="30.00" lengthAdjust="spacingAndGlyphs">480 V</text>
<text x="499.20" y="609.24" font-size="11" fill="#808080" textLength="12.80" lengthAdjust="spacingAndGlyphs">#3</text>
<path d="M462.500 630.700 L502 668" stroke="#555" stroke-width="1"/>
<rect x="466" y="473" width="14.5" height="45" rx="1" fill="#6f6f6f" stroke="#2a2a2a" stroke-width="1.100"/>
<rect x="498" y="483" width="14.5" height="25.5" rx="1" fill="#6f6f6f" stroke="#2a2a2a" stroke-width="1.100"/>
<rect x="530.5" y="483" width="13.5" height="25.5" rx="1" fill="#6f6f6f" stroke="#2a2a2a" stroke-width="1.100"/>
<rect x="561" y="483" width="13.5" height="8" rx="1" fill="#6f6f6f" stroke="#2a2a2a" stroke-width="1.100"/>
<rect x="590.5" y="479.5" width="13.5" height="15.0" rx="1" fill="#6f6f6f" stroke="#2a2a2a" stroke-width="1.100"/>
<rect x="465" y="561" width="14.5" height="46" rx="1" fill="#6f6f6f" stroke="#2a2a2a" stroke-width="1.100"/>
<rect x="496.5" y="574" width="13.5" height="25.5" rx="1" fill="#6f6f6f" stroke="#2a2a2a" stroke-width="1.100"/>
<rect x="530.5" y="574" width="13.5" height="25.5" rx="1" fill="#6f6f6f" stroke="#2a2a2a" stroke-width="1.100"/>
<rect x="559.5" y="574.5" width="12.5" height="9.5" rx="1" fill="#6f6f6f" stroke="#2a2a2a" stroke-width="1.100"/>
<rect x="587.5" y="570.5" width="13.5" height="15.5" rx="1" fill="#6f6f6f" stroke="#2a2a2a" stroke-width="1.100"/>
<rect x="526.4" y="670" width="13.200000000000045" height="26.5" rx="1" fill="#6f6f6f" stroke="#2a2a2a" stroke-width="1.100"/>
<rect x="555.4" y="670.5" width="13.100000000000023" height="25.5" rx="1" fill="#6f6f6f" stroke="#2a2a2a" stroke-width="1.100"/>
<rect x="358.300" y="662" width="32.500" height="47" fill="#6c6c6c" stroke="#2a2a2a" stroke-width="1.200"/>
<path d="M358.300 664.500 H390.800" stroke="#8a8a8a" stroke-width="1"/>
<text x="458.50" y="469.40" font-size="9.5" fill="#000" textLength="29.00" lengthAdjust="spacingAndGlyphs">MDP-3</text>
<text x="491.50" y="481.40" font-size="9.5" fill="#000" textLength="25.00" lengthAdjust="spacingAndGlyphs">LP-3B</text>
<text x="522.00" y="481.40" font-size="9.5" fill="#000" textLength="27.50" lengthAdjust="spacingAndGlyphs">MP-3B</text>
<text x="555.00" y="500.90" font-size="9.5" fill="#000" textLength="26.50" lengthAdjust="spacingAndGlyphs">TP-3A</text>
<text x="582.50" y="477.90" font-size="9.5" fill="#000" textLength="27.00" lengthAdjust="spacingAndGlyphs">PP-3A</text>
<text x="461.50" y="557.40" font-size="9.5" fill="#000" textLength="28.50" lengthAdjust="spacingAndGlyphs">MDP-2</text>
<text x="489.50" y="572.40" font-size="9.5" fill="#000" textLength="25.00" lengthAdjust="spacingAndGlyphs">LP-2B</text>
<text x="521.50" y="572.40" font-size="9.5" fill="#000" textLength="28.00" lengthAdjust="spacingAndGlyphs">MP-2B</text>
<text x="552.00" y="590.90" font-size="9.5" fill="#000" textLength="26.50" lengthAdjust="spacingAndGlyphs">TP-2A</text>
<text x="580.50" y="568.90" font-size="9.5" fill="#000" textLength="27.50" lengthAdjust="spacingAndGlyphs">PP-2A</text>
<text x="520.50" y="667.40" font-size="9.5" fill="#000" textLength="24.60" lengthAdjust="spacingAndGlyphs">LP-1B</text>
<text x="547.80" y="667.90" font-size="9.5" fill="#000" textLength="27.40" lengthAdjust="spacingAndGlyphs">MP-1B</text>
<text x="580.90" y="656.20" font-size="9.5" fill="#000" textLength="26.60" lengthAdjust="spacingAndGlyphs">PP-1A</text>
<text x="580.90" y="678.40" font-size="9.5" fill="#000" textLength="26.60" lengthAdjust="spacingAndGlyphs">TP-1A</text>
<text x="481.50" y="705.40" font-size="9.5" fill="#000" textLength="20.00" lengthAdjust="spacingAndGlyphs">SWB</text>
<text x="363.10" y="656.10" font-size="9.5" fill="#000" textLength="27.40" lengthAdjust="spacingAndGlyphs">T-SVC</text>
<path d="M607.500 653 H636 L644 666.500 M607.500 675 H636.500" stroke="#000" stroke-width="1" fill="none"/>
<rect x="636.500" y="671" width="6" height="8.500" fill="#808080" stroke="#222" stroke-width="1"/>
<rect x="642.500" y="667.400" width="4" height="15" fill="#8a8a8a" stroke="#222" stroke-width="1"/>
<g fill="none" stroke="#000">
<path d="M466 511.200 H458.700 V600" stroke-width="3"/>
<path d="M466 511.200 H458.700 V600" stroke="#fff" stroke-width=".7"/>
<path d="M465.500 599.300 H462" stroke-width="1.200"/>
<path d="M460.400 598 V631 Q460.400 635.600 465 635.600 H469.500 Q472.500 635.600 472.500 639 V650" stroke-width="4.800"/>
<path d="M460.400 600 V631 Q460.400 635.600 465 635.600 H469.500 Q472.500 635.600 472.500 639 V650" stroke="#fff" stroke-width="2.200"/>
<path d="M460.400 601 V631" stroke="#999" stroke-width=".8" stroke-dasharray="3 2"/>
<path d="M479 650 V640 Q479 636.700 482.300 636.700 H497 Q504.200 636.700 504.200 643.500" stroke-width="2.600"/>
</g>
<path d="M362 709 V738 Q362 749 351 749 H342" fill="none" stroke="#000" stroke-width="2.600"/>
<path d="M362 709 V738 Q362 749 351 749 H342" fill="none" stroke="#a0a0a0" stroke-width=".8" stroke-dasharray="4 2"/>
<path d="M386 709 V740 Q386 749 395 749 H456 Q465.500 749 465.500 739 V709" fill="none" stroke="#000" stroke-width="1.900"/>
<rect x="461.200" y="650.200" width="20.500" height="58.500" fill="#3c3c3c" stroke="#000" stroke-width="1.400"/>
<rect x="463.500" y="653.5" width="15.500" height="9.500" fill="#6a6a6a"/>
<rect x="463.500" y="664.0" width="15.500" height="5.500" fill="#1e1e1e"/>
<path d="M464.500 664.8 H477.500 M466 664.8 V669.0 M469.700 664.8 V669.0 M473.200 664.8 V669.0 M476.600 664.8 V669.0" stroke="#d8d8d8" stroke-width="1" fill="none"/>
<rect x="463.500" y="671.5" width="15.500" height="9.500" fill="#6a6a6a"/>
<rect x="463.500" y="682.0" width="15.500" height="5.500" fill="#1e1e1e"/>
<path d="M464.500 682.8 H477.500 M466 682.8 V687.0 M469.700 682.8 V687.0 M473.200 682.8 V687.0 M476.600 682.8 V687.0" stroke="#d8d8d8" stroke-width="1" fill="none"/>
<rect x="463.500" y="688.7" width="15.500" height="9.500" fill="#6a6a6a"/>
<rect x="463.500" y="699.2" width="15.500" height="5.500" fill="#1e1e1e"/>
<path d="M464.500 700.0 H477.500 M466 700.0 V704.2 M469.700 700.0 V704.2 M473.200 700.0 V704.2 M476.600 700.0 V704.2" stroke="#d8d8d8" stroke-width="1" fill="none"/>
<path d="M461.200 670.300 H481.700 M461.200 687.500 H481.700 M461.200 704.800 H481.700" stroke="#000" stroke-width="1"/>
<rect x="463" y="705.800" width="17" height="2" fill="#777"/>
<text x="473.10" y="648.94" font-size="11" fill="#808080">150.8 mm</text>
<path d="M504.700 614 H647 M504.700 614 V643 M549.400 614 V651 M516.500 650.200 H555 M546.500 646.500 L553.500 655.500 M643 609 L647 614" stroke="#6f9fe6" stroke-width="1.200" fill="none"/>
<path d="M502 613.5 H518 M531 613.5 H572 M585 613.5 H601 M613 613.5 H655 M667 613.5 H684" stroke="#0a1640" stroke-width="1.300" fill="none"/>
<circle cx="504.7" cy="613.8" r="3.200" fill="#5f98e4" stroke="#4a7fd0" stroke-width=".8"/>
<circle cx="551.3" cy="613.8" r="3.200" fill="#5f98e4" stroke="#4a7fd0" stroke-width=".8"/>
<circle cx="646.5" cy="613.8" r="3.200" fill="#5f98e4" stroke="#4a7fd0" stroke-width=".8"/>
<circle cx="532.2" cy="650.2" r="3.200" fill="#5f98e4" stroke="#4a7fd0" stroke-width=".8"/>
<path d="M555 628 V637.600 M567.700 628 V637.600 M555 632.600 H567.700 M567.700 631 L569 626 M569 620 V629.800 M581.300 620 V629.800 M569 623.500 H581.300" stroke="#1b3fc6" stroke-width="1.300" fill="none"/>
<text x="557.90" y="605.56" font-size="10.5" fill="#1b3fc6" textLength="33.10" lengthAdjust="spacingAndGlyphs">5429.3</text>
<text x="508.10" y="641.70" font-size="9.5" fill="#1f55c8">MDP-1</text>
<text transform="translate(543.800 648.500) rotate(-90)" font-size="14.200" fill="#1b3fc6">1435.1</text>
<path d="M502 621 L508.700 619.500 L504.800 624 L507.400 624 L501.200 632.400 L503.400 627 L499.700 627 Z" fill="#6a6a6a"/>
<path d="M446.500 612.700 H457 L451.700 621.700 H442 Z M445.300 611.500 L447.500 614 M456 611.500 L458 614 M440.800 620.500 L443 623 M450.600 620.500 L452.800 623" fill="none" stroke="#2a66d4" stroke-width="1.300"/>
<path d="M455.200 618 V629 M453.400 626.500 L455.200 629.300 L457 626.500 M460 630 V619.500 M458.200 622 L460 619.200 L461.800 622" stroke="#2a66d4" stroke-width="1.100" fill="none"/>
<rect x="498.200" y="643.500" width="13.500" height="57" fill="#4064b8"/>
<rect x="498.700" y="644" width="12.500" height="12.500" fill="#fff" stroke="#2c56c0" stroke-width="1"/>
<path d="M500 650.2 H510 M505 645.2 V655.2" stroke="#0f2fb4" stroke-width="3.8"/>
<circle cx="496.9" cy="672.5" r="7" fill="none" stroke="#2450c8" stroke-width="1.200"/>
<path d="M491.5 672.5 H502.29999999999995 M496.9 667.1 V677.9" stroke="#0f2fb4" stroke-width="3.5"/>
<circle cx="511.7" cy="672.5" r="7" fill="none" stroke="#2450c8" stroke-width="1.200"/>
<path d="M506.3 672.5 H517.1 M511.7 667.1 V677.9" stroke="#0f2fb4" stroke-width="3.5"/>
<circle cx="505" cy="696" r="7" fill="none" stroke="#2450c8" stroke-width="1.200"/>
<path d="M499.6 696 H510.4 M505 690.6 V701.4" stroke="#0f2fb4" stroke-width="3.5"/>
</g></svg>
</div></body></html>
